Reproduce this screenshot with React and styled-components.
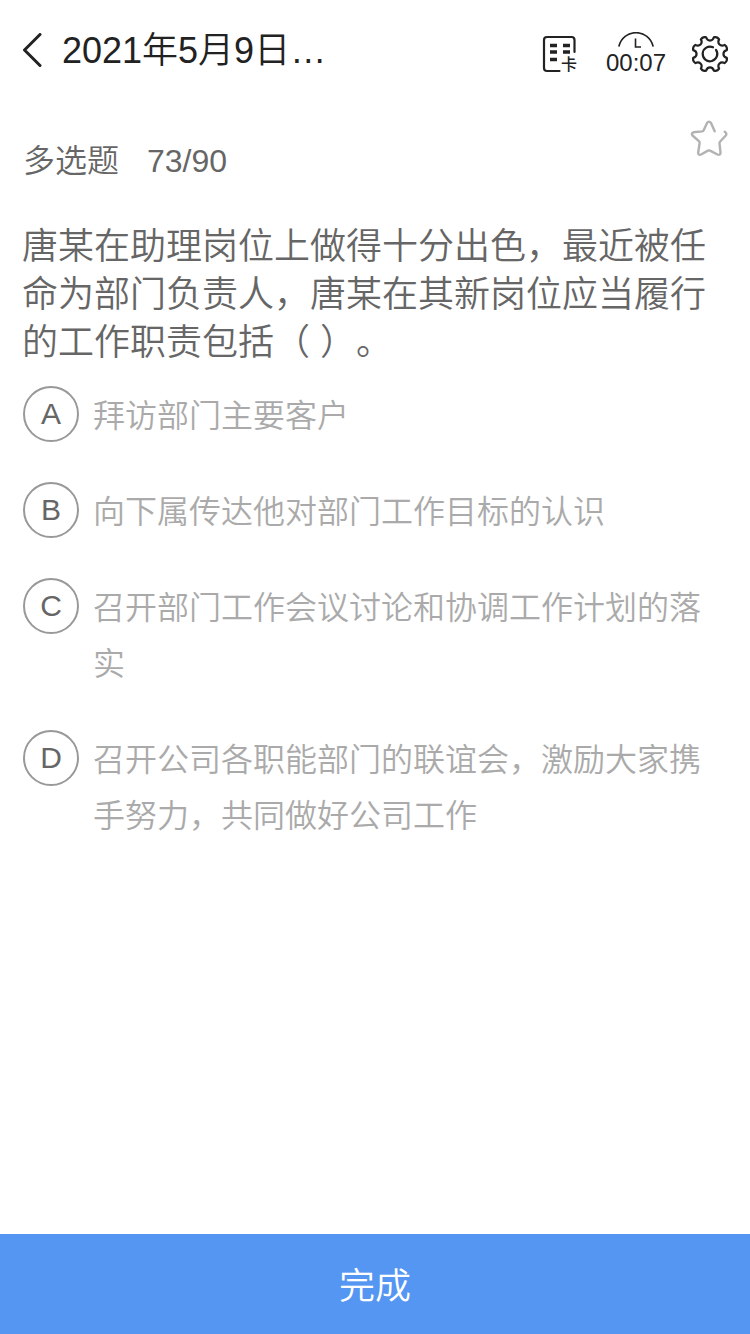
import React, { useState } from "react";
import styled, { createGlobalStyle } from "styled-components";

const GlobalStyle = createGlobalStyle`
  * {
    box-sizing: border-box;
  }
  body {
    margin: 0;
    background-color: white;
    font-family: "Liberation Sans", "Noto Sans CJK SC", sans-serif;
    font-weight: 350;
    text-spacing-trim: space-all;
    color: #222;
  }
  button {
    padding: 0;
    border: 0;
    background: none;
    color: inherit;
    font: inherit;
    cursor: pointer;
  }
  svg {
    display: block;
    fill: none;
    stroke: currentColor;
    stroke-linecap: round;
    stroke-linejoin: round;
  }
`;

const Page = styled.div`
  min-height: 100vh;
  display: flex;
  flex-direction: column;
`;

const Header = styled.header`
  height: 102px;
  padding: 0 22px;
  display: flex;
  align-items: center;
`;

const Title = styled.h1`
  flex: 1;
  margin: 0 0 0 20px;
  font-size: 36px;
  font-weight: 350;
  line-height: 48px;
`;

const Actions = styled.div`
  display: flex;
  align-items: center;
  gap: 26px;
  padding-top: 6px;
`;

const Timer = styled.div`
  display: flex;
  flex-direction: column;
  align-items: center;
  font-size: 24px;
  line-height: 26px;
`;

const Main = styled.main`
  flex: 1;
  padding: 18px 22px 40px;
  color: #666;
`;

const Meta = styled.div`
  display: flex;
  align-items: flex-start;
  justify-content: space-between;
`;

const Kind = styled.p`
  display: flex;
  gap: 28px;
  margin: 17px 0 0;
  padding-left: 1px;
  font-size: 32px;
  line-height: 48px;
`;

const StarButton = styled.button`
  && {
    color: ${props => (props.$on ? "#5596f2" : "#b2b2b2")};
  }
`;

const Question = styled.h2`
  margin: 38px 0 19px;
  font-size: 36px;
  font-weight: 350;
  line-height: 48px;
`;

const Options = styled.ul`
  display: flex;
  flex-direction: column;
  gap: 38px;
  margin: 0;
  padding: 0 0 0 1px;
  list-style: none;
`;

const Option = styled.label`
  position: relative;
  display: flex;
  align-items: flex-start;
  gap: 14px;
  cursor: pointer;
`;

const Tick = styled.input`
  position: absolute;
  width: 56px;
  height: 56px;
  margin: 0;
  opacity: 0;
`;

const Letter = styled.span`
  flex: none;
  width: 56px;
  height: 56px;
  display: flex;
  align-items: center;
  justify-content: center;
  border: 2px solid #999;
  border-radius: 50%;
  font-size: 30px;
  line-height: 52px;

  ${Tick}:checked + & {
    border-color: #5596f2;
    background-color: #5596f2;
    color: white;
  }
`;

const OptionText = styled.span`
  padding-top: 2px;
  font-size: 32px;
  line-height: 56px;
  color: #aaa;
`;

const Submit = styled.button`
  && {
    height: 100px;
    padding-bottom: 2px;
    background-color: #5596f2;
    color: white;
    font-size: 36px;
  }
`;

const BackIcon = () => (
  <svg width="20" height="36" viewBox="0 0 20 36" strokeWidth="3">
    <path d="M18 1.5 2.5 17 18 32.5" />
  </svg>
);

const CardIcon = () => (
  <svg width="38" height="38" viewBox="0 0 38 38" strokeWidth="2.2">
    <path d="M32.5 17V5q0-3-3-3H5Q2 2 2 5v28q0 3 3 3h12.5" />
    <path
      d="M8 10.5h7M21 10.5h7M8 17h7M21 17h7M8 24.5h7"
      strokeWidth="3.5"
      strokeLinecap="butt"
    />
    <text
      x="19"
      y="35"
      fill="currentColor"
      stroke="none"
      fontSize="16"
      fontWeight="500"
    >
      卡
    </text>
  </svg>
);

const ClockIcon = () => (
  <svg width="38" height="18" viewBox="0 0 38 18" strokeWidth="1.6">
    <path d="M2 14A17.5 17.5 0 0 1 36 14" />
    <path d="M18.5 6.500V15H24" strokeLinecap="butt" strokeLinejoin="miter" />
  </svg>
);

const GearIcon = () => (
  <svg width="36" height="36" viewBox="-18 -18 36 36" strokeWidth="2.2">
    <path d={gearPath} />
    <path d="M3 -6.7A7.3 7.3 0 1 0 6 -4.2" />
  </svg>
);

const StarIcon = () => (
  <svg width="38" height="38" viewBox="0 0 38 38" strokeWidth="2.4">
    <path d="M24.7 11.3 21 3Q19 .2 17 3L13.8 10Q13.3 11.2 12 11.4L3.500 12.300Q.8 13.300 2.500 15.500L8.900 21.200Q9.700 22 9.600 23.200L8.200 32.500Q8.200 35.700 11 34.500L18 30.600Q19 30.100 20 30.600L27.500 34.500Q30.500 35.700 30.500 32.500L29.500 23.500Q29.400 22.300 30.200 21.500L35.800 15.500Q37.300 13.500 34.700 11.800" />
  </svg>
);

// eight lobes with a rounded notch between each pair
const gearPoint = (degrees, radius) => {
  const angle = (degrees * Math.PI) / 180;
  return `${(radius * Math.cos(angle)).toFixed(2)} ${(radius * Math.sin(angle)).toFixed(2)}`;
};

const gearPath =
  `M${gearPoint(-13, 17.2)}` +
  [0, 45, 90, 135, 180, 225, 270, 315]
    .map(
      a =>
        `C${gearPoint(a - 12, 12.6)} ${gearPoint(a + 12, 12.6)} ${gearPoint(a + 13, 17.2)}` +
        `Q${gearPoint(a + 22.5, 19)} ${gearPoint(a + 32, 17.2)}`
    )
    .join("") +
  "Z";

const options = [
  { letter: "A", text: "拜访部门主要客户" },
  { letter: "B", text: "向下属传达他对部门工作目标的认识" },
  { letter: "C", text: "召开部门工作会议讨论和协调工作计划的落实" },
  { letter: "D", text: "召开公司各职能部门的联谊会，激励大家携手努力，共同做好公司工作" }
];

export default () => {
  const [starred, setStarred] = useState(false);
  return (
    <Page lang="zh-CN">
      <GlobalStyle />
      <Header>
        <button type="button" aria-label="返回">
          <BackIcon />
        </button>
        <Title>2021年5月9日…</Title>
        <Actions>
          <button type="button" aria-label="答题卡">
            <CardIcon />
          </button>
          <Timer>
            <ClockIcon />
            <time>00:07</time>
          </Timer>
          <button type="button" aria-label="设置">
            <GearIcon />
          </button>
        </Actions>
      </Header>
      <Main>
        <Meta>
          <Kind>
            <span>多选题</span>
            <span>73/90</span>
          </Kind>
          <StarButton
            type="button"
            aria-label="收藏"
            $on={starred}
            onClick={() => setStarred(!starred)}
          >
            <StarIcon />
          </StarButton>
        </Meta>
        <Question>
          唐某在助理岗位上做得十分出色，最近被任命为部门负责人，唐某在其新岗位应当履行的工作职责包括（ ）。
        </Question>
        <Options>
          {options.map(option => (
            <li key={option.letter}>
              <Option>
                <Tick type="checkbox" name="answer" value={option.letter} />
                <Letter>{option.letter}</Letter>
                <OptionText>{option.text}</OptionText>
              </Option>
            </li>
          ))}
        </Options>
      </Main>
      <Submit type="button">完成</Submit>
    </Page>
  );
};
